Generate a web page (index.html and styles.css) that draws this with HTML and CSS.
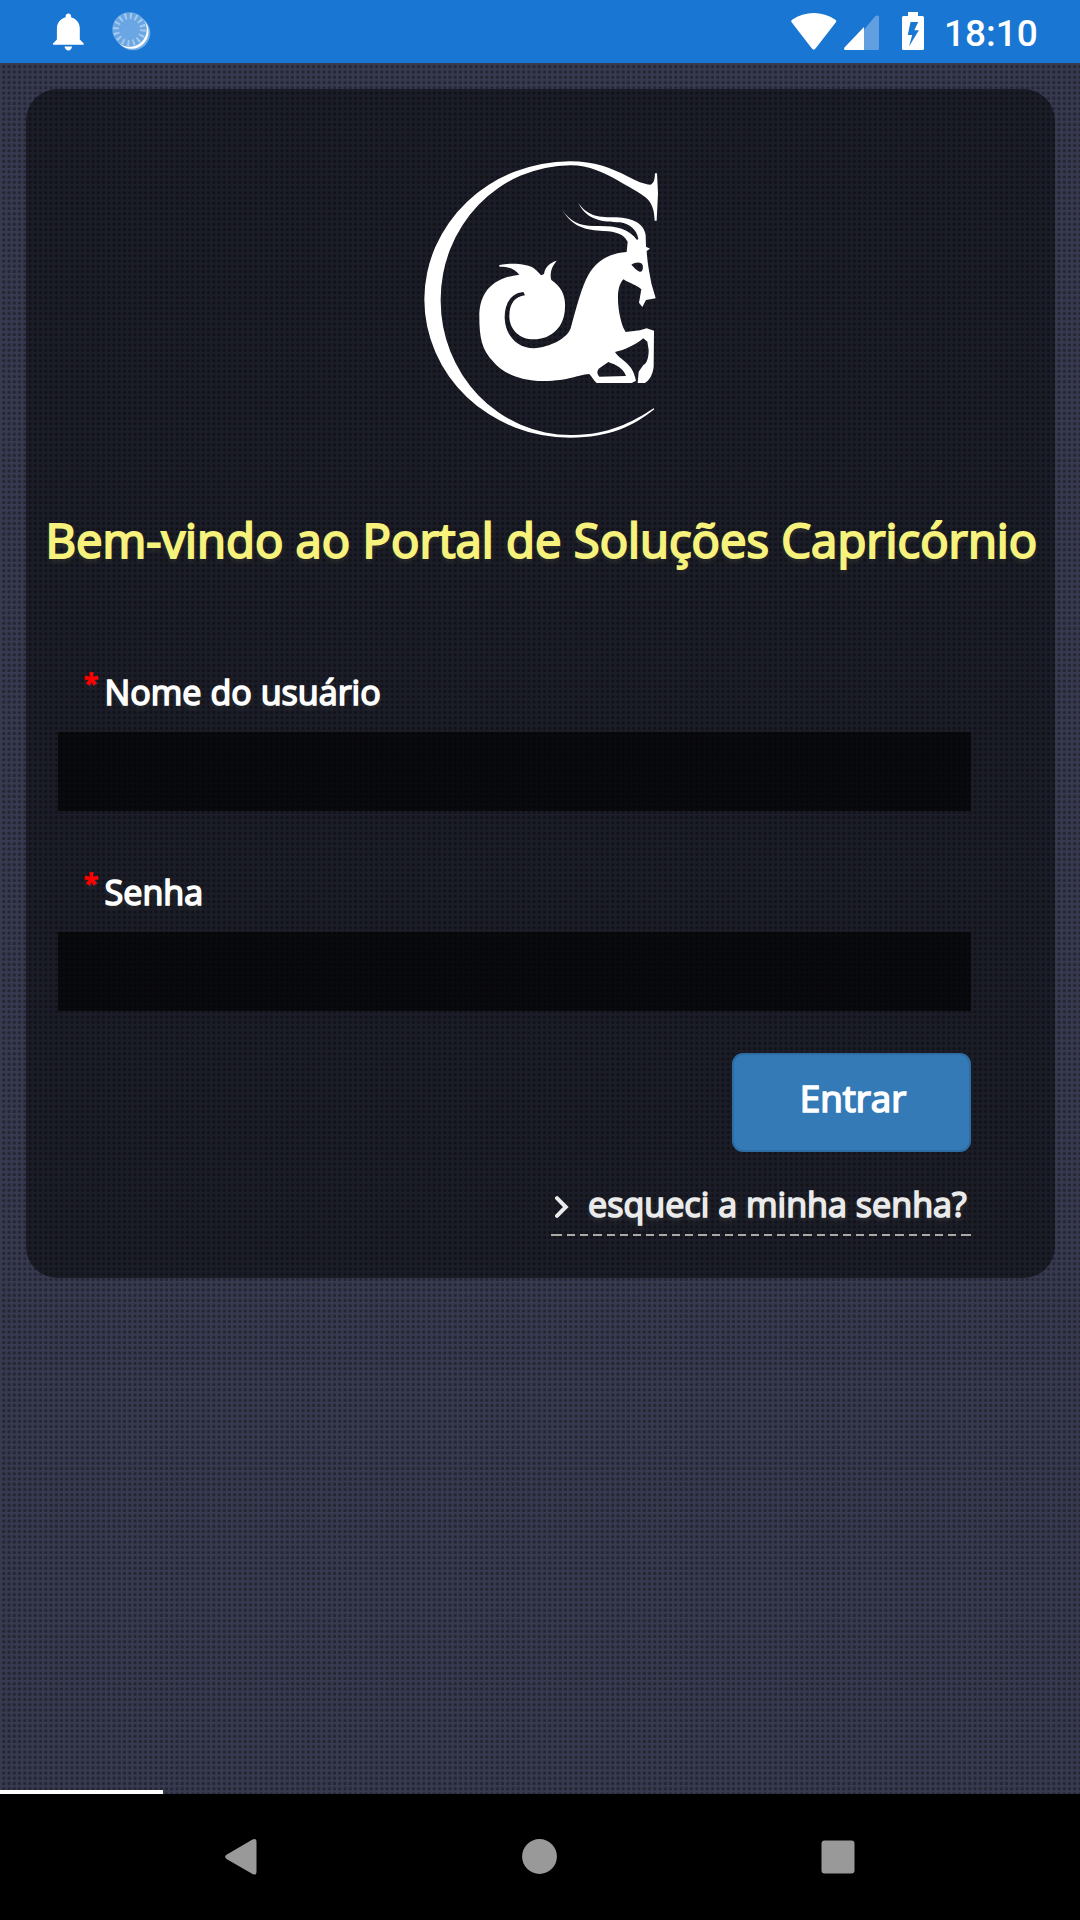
FILE: index.html
```html
<!DOCTYPE html>
<html lang="pt-BR">
<head>
<meta charset="utf-8">
<title>Portal de Soluções Capricórnio</title>
<link rel="stylesheet" href="styles.css">
</head>
<body>
<header class="status">
  <div class="status-left">
    <svg class="bell" width="31" height="38" viewBox="0 0 31 38"><path fill="#fff" d="M15.400 0.500c1.700 0 2.700 1.200 2.700 2.900v.8c5 1.300 8.700 5.800 8.700 11v11.300l3.900 3.900v1.300H0v-1.300l3.900-3.900V15.200c0-5.200 3.700-9.700 8.700-11v-.8c0-1.700 1.100-2.900 2.800-2.900zM11.500 33.500h7.600c-.3 2.200-1.700 4-3.700 4s-3.600-1.800-3.900-4z"/></svg>
    <svg class="sync" width="40" height="40" viewBox="0 0 40 40"><circle cx="21" cy="21" r="17.300" fill="#75aee6"/><circle cx="19.500" cy="19.800" r="17" fill="#fff"/><circle cx="17.500" cy="17.500" r="17.300" fill="#6aa6e3"/><circle cx="17.500" cy="17.500" r="13.500" fill="none" stroke="#a5c9ee" stroke-width="6" stroke-dasharray="2 3.301"/></svg>
  </div>
  <div class="status-right">
    <svg class="wifi" width="46" height="38" viewBox="0 0 46 38"><path fill="#fff" d="M.8 9.400C-.1 8.300 0 7.500 1.100 6.700 14-2.200 31.500-2.200 44.400 6.700c1.100.8 1.200 1.600.3 2.700L24.500 35.500c-1.200 1.500-2.400 1.500-3.600 0z"/></svg>
    <svg class="signal" width="36" height="36" viewBox="0 0 36 36"><path fill="#619fe0" d="M20 14.500L31.500 1C33 0 35 .3 35 2v31.500q0 1.500-1.500 1.500H20z"/><path fill="#fff" d="M20 12v23H1.500C0 35-.3 33.500.7 32.300z"/></svg>
    <svg class="battery" width="22" height="38" viewBox="0 0 22 38"><path fill="#fff" fill-rule="evenodd" d="M6 0h10v4h4.500Q22 4 22 5.500v31Q22 38 20.500 38h-19Q0 38 0 36.500v-31Q0 4 1.500 4H6zM8.500 10l-2.700 13h4.400L7 34.500 16.900 18.300h-4.600L16.200 10z"/></svg>
    <span class="time">18:10</span>
  </div>
</header>
<main class="screen">
  <section class="card">
    <svg class="logo" width="260" height="300" viewBox="0 0 780 900">
      <g fill="#fff">
        <path d="M735 70L741 70L744 130L740 212L734 212C733 180 726 158 708 143C690 128 668 117 635 98C585 68 535 46 482 46A390 403 0 0 0 92 450A390 403 0 0 0 482 855C590 857 665 818 731 775L733 778C670 828 600 863 480 863A437 415 0 0 1 43 448A437 415 0 0 1 480 34C555 34 600 53 655 80C680 93 700 102 722 104C734 98 734 85 735 70Z"/>
        <path fill-rule="evenodd" d="M268 345C300 338 345 340 367 352C380 360 388 372 394 376L402 372C405 350 420 338 440 332C425 350 418 370 424 390C455 410 467 440 465 470C465 530 425 568 370 568C330 568 298 540 298 498C298 460 315 440 345 436L340 426C300 430 283 465 284 505C286 555 320 595 372 595C420 592 472 565 482 535C500 470 515 410 535 375C560 330 600 310 650 306L653 275C640 252 620 245 580 243C530 240 490 235 455 178C480 215 510 228 550 228C610 226 655 232 681 270L685 266C680 240 660 222 630 217C580 215 530 212 505 158C530 195 560 202 610 202C660 203 700 215 707 255L708 290L720 296L710 303C712 340 718 365 724 400L737 445L708 450L697 471L687 458L694 418C680 405 660 400 640 388C620 410 622 450 628 490C635 525 640 535 647 546L690 541L710 535L732 542L731 650C728 675 718 690 705 699L683 699L686 665L700 645C712 640 716 620 716 600L712 575L700 565C675 585 645 600 615 606C625 622 645 632 660 650C672 665 675 680 678 692L665 699L560 699C550 690 545 680 538 672C500 675 480 692 400 693C330 693 280 670 250 635C215 600 208 560 208 500C208 440 235 385 328 374C315 358 300 350 268 350ZM664 344C676 336 695 334 698 346C700 355 698 366 689 365C680 362 672 352 664 344ZM566 656L595 636C620 645 640 655 648 678L568 680C561 672 560 665 566 656Z"/>
      </g>
    </svg>
    <h1 class="title">Bem-vindo ao Portal de Soluções Capricórnio</h1>
    <form class="form">
      <label class="label" for="user"><span class="req">*</span><span class="name">Nome do usuário</span></label>
      <input class="field" id="user" type="text">
      <label class="label" for="pass"><span class="req">*</span><span class="name">Senha</span></label>
      <input class="field" id="pass" type="password">
      <button class="enter" type="button">Entrar</button>
      <a class="forgot"><svg class="chevron" width="14" height="22" viewBox="0 0 14 22"><path d="M2 2.200L10.800 11 2 19.800" fill="none" stroke="#ebebeb" stroke-width="4" stroke-linecap="round"/></svg><span class="forgot-text">esqueci a minha senha?</span></a>
    </form>
  </section>
  <div class="progress"></div>
</main>
<nav class="nav">
  <svg width="36" height="40" viewBox="0 0 36 40"><path fill="#999" d="M3.500 17.700L29.500 2.500Q33.500.5 33.500 5V34.500Q33.500 39 29.500 37L3.500 22Q.7 19.850 3.500 17.700z"/></svg>
  <svg width="36" height="36" viewBox="0 0 36 36"><circle cx="17.500" cy="17.500" r="17.400" fill="#999"/></svg>
  <svg width="34" height="34" viewBox="0 0 34 34"><rect x=".5" y=".5" width="33" height="33" rx="3" fill="#999"/></svg>
</nav>
</body>
</html>
```
FILE: styles.css
```css
* { box-sizing: border-box; }
body {
  margin: 0;
  width: 1080px;
  height: 1920px;
  display: flex;
  flex-direction: column;
  overflow: hidden;
  background: #000;
  color: #fff;
  font-family: "Open Sans", sans-serif;
}
svg { display: block; flex: none; }

.status {
  height: 63px;
  flex: none;
  display: flex;
  justify-content: space-between;
  background: #1976d2;
  padding: 12px 43px 0 53px;
}
.status-left, .status-right { display: flex; align-items: flex-start; }
.sync { margin-left: 28px; }
.bell { margin-top: 1px; }
.wifi { margin-top: 1px; }
.signal { margin: 3px 0 0 7px; }
.battery { margin-left: 22px; }
.time {
  margin-left: 20px;
  width: 93px;
  font: 500 37px/44px Roboto, sans-serif;
  white-space: nowrap;
}

.screen {
  flex: 1;
  display: flex;
  flex-direction: column;
  justify-content: space-between;
  padding: 26px 25px 0 26px;
  background-color: #373a50;
  background-image: radial-gradient(circle at 3.94px 3.94px, #232530 0.9px, rgba(35, 37, 48, 0.35) 2px, rgba(35, 37, 48, 0) 2.7px);
  background-size: 5.25px 5.25px;
}
.card {
  height: 1189px;
  border-radius: 31.5px;
  background: rgba(0, 0, 0, 0.5);
  display: flex;
  flex-direction: column;
}
.logo { margin: 61px 0 0 384px; }
.title {
  margin: 52px 0 0 19.5px;
  font-size: 47.25px;
  line-height: 76px;
  font-weight: 400;
  color: #f6f27c;
  -webkit-text-stroke: 2px #f6f27c;
  text-shadow: 0 3px 5px rgba(110, 115, 80, 0.35);
  white-space: nowrap;
}
.form {
  width: 913px;
  margin: 77.4px 0 0 32px;
  display: flex;
  flex-direction: column;
}
.label {
  display: flex;
  height: 77px;
  padding-left: 26px;
  font-size: 34.125px;
  line-height: 74px;
  -webkit-text-stroke: 1.6px #fff;
  text-shadow: 0 3px 5px rgba(110, 115, 100, 0.35);
}
.req {
  width: 20.6px;
  font-size: 26px;
  line-height: 54px;
  color: #f00;
  -webkit-text-stroke: 1.6px #f00;
}
.name { white-space: nowrap; }
.field {
  width: 913px;
  height: 79px;
  border: 0;
  padding: 0 20px;
  background: rgba(0, 0, 0, 0.65);
  color: #fff;
  font: 34.125px "Open Sans", sans-serif;
  outline: 0;
}
.field + .label { margin-top: 43.4px; }
.enter {
  align-self: flex-end;
  width: 239px;
  height: 99.5px;
  margin-top: 42px;
  padding: 0 0 9px 3px;
  border: 2px solid #2e6da4;
  border-radius: 11px;
  background: #337ab7;
  color: #fff;
  font: 36.75px/60px "Open Sans", sans-serif;
  -webkit-text-stroke: 1.7px #fff;
}
.forgot {
  align-self: flex-end;
  width: 420px;
  height: 70px;
  margin-top: 13.7px;
  padding: 0 0 0 4px;
  display: flex;
  align-items: flex-start;
  color: #ebebeb;
  font-size: 34.125px;
  line-height: 77px;
  background: repeating-linear-gradient(90deg, #a9a9a5 0 8.200px, transparent 8.200px 13.130px) 3px 100% / 417px 2px no-repeat,
    linear-gradient(#a9a9a5, #a9a9a5) 0 100% / 6px 2px no-repeat,
    linear-gradient(#a9a9a5, #a9a9a5) 100% 100% / 6px 2px no-repeat;
}
.chevron { margin-top: 30px; }
.forgot-text {
  margin-left: 19px;
  -webkit-text-stroke: 1.6px #ebebeb;
  text-shadow: 0 3px 5px rgba(110, 115, 100, 0.4);
  white-space: nowrap;
}
.progress {
  width: 163px;
  height: 4px;
  margin-left: -26px;
  background: #fff;
}
.nav {
  height: 126px;
  flex: none;
  display: flex;
  align-items: center;
  justify-content: space-between;
  padding: 0 225px 0 223px;
  background: #000;
}
```
